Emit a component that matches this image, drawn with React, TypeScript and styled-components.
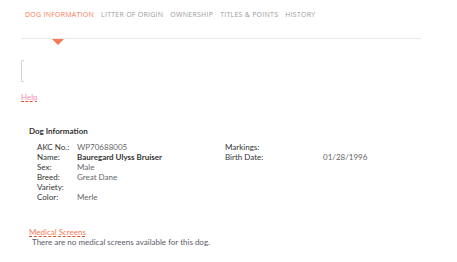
import React, { ReactElement } from "react";
import styled, { createGlobalStyle } from "styled-components";

const GlobalStyle = createGlobalStyle`
  body {
    margin: 0;
    background: #ffffff;
    font-family: "Lato", "Liberation Sans", sans-serif;
  }
`;

const colors = {
  accent: "#f47a55",
  tabGray: "#9a9a9a",
  line: "#e9e9e9",
  label: "#333333",
  value: "#666666",
  pink: "#f28fb4",
};

const Page = styled.div`
  display: flex;
  flex-direction: column;
  width: 400px;
  padding-left: 21px;
`;

const TabBar = styled.div`
  display: flex;
  flex-direction: row;
  align-items: flex-start;
  gap: 7px;
  height: 39px;
  padding: 10px 0 0 4px;
  box-sizing: border-box;
  border-bottom: 1px solid ${colors.line};
`;

const Tab = styled.div<{ $active?: boolean }>`
  position: relative;
  font-family: "Open Sans", "Liberation Sans", sans-serif;
  font-size: 7px;
  line-height: 9px;
  text-transform: uppercase;
  letter-spacing: 0.25px;
  color: ${(p) => (p.$active ? colors.accent : colors.tabGray)};
  height: 28px;

  &::after {
    content: "";
    display: ${(p) => (p.$active ? "block" : "none")};
    position: absolute;
    left: 50%;
    bottom: -7px;
    margin-left: -8px;
    border-left: 6px solid transparent;
    border-right: 6px solid transparent;
    border-top: 6px solid ${colors.accent};
  }
`;

const EmptyBox = styled.div`
  width: 2px;
  height: 20px;
  margin-top: 21px;
  border: 1px solid #d4d4d4;
  border-right: none;
  border-radius: 2px 0 0 2px;
`;

const DashedLink = styled.a<{ $color: string }>`
  align-self: flex-start;
  font-size: 8px;
  line-height: 10px;
  color: ${(p) => p.$color};
  text-decoration: underline dashed #d9532c;
  text-underline-offset: 1px;
  cursor: pointer;
`;

const HelpLink = styled(DashedLink)`
  margin-top: 10px;
`;

const Section = styled.div`
  display: flex;
  flex-direction: column;
  padding-left: 8px;
  margin-top: 24px;
`;

const SectionTitle = styled.div`
  font-size: 8px;
  font-weight: 700;
  color: ${colors.label};
  line-height: 10px;
`;

const InfoGrid = styled.div`
  display: grid;
  grid-template-columns: 188px 1fr;
  padding-left: 8px;
  margin-top: 6px;
`;

const Column = styled.div`
  display: flex;
  flex-direction: column;
`;

const Row = styled.div<{ $labelWidth: number }>`
  display: grid;
  grid-template-columns: ${(p) => p.$labelWidth}px 1fr;
  font-size: 8px;
  line-height: 10px;
  height: 10px;
`;

const Label = styled.span`
  color: ${colors.label};
`;

const Value = styled.span<{ $strong?: boolean }>`
  color: ${(p) => (p.$strong ? colors.label : colors.value)};
  font-weight: ${(p) => (p.$strong ? 700 : 400)};
`;

const MedicalBlock = styled.div`
  display: flex;
  flex-direction: column;
  margin-top: 25px;
`;

const EmptyNote = styled.div`
  font-size: 8px;
  line-height: 10px;
  color: #5c5a6a;
  padding-left: 3px;
`;

const tabs = ["Dog Information", "Litter of Origin", "Ownership", "Titles & Points", "History"];

const leftRows: [string, string, boolean?][] = [
  ["AKC No.:", "WP70688005"],
  ["Name:", "Bauregard Ulyss Bruiser", true],
  ["Sex:", "Male"],
  ["Breed:", "Great Dane"],
  ["Variety:", ""],
  ["Color:", "Merle"],
];

const rightRows: [string, string][] = [
  ["Markings:", ""],
  ["Birth Date:", "01/28/1996"],
];

function App(): ReactElement {
  return (
    <Page>
      <GlobalStyle />
      <TabBar>
        {tabs.map((t, i) => (
          <Tab key={t} $active={i === 0}>
            {t}
          </Tab>
        ))}
      </TabBar>
      <EmptyBox />
      <HelpLink $color={colors.pink}>Help</HelpLink>
      <Section>
        <SectionTitle>Dog Information</SectionTitle>
        <InfoGrid>
          <Column>
            {leftRows.map(([label, value, strong]) => (
              <Row key={label} $labelWidth={40}>
                <Label>{label}</Label>
                <Value $strong={strong}>{value}</Value>
              </Row>
            ))}
          </Column>
          <Column>
            {rightRows.map(([label, value]) => (
              <Row key={label} $labelWidth={98}>
                <Label>{label}</Label>
                <Value>{value}</Value>
              </Row>
            ))}
          </Column>
        </InfoGrid>
        <MedicalBlock>
          <DashedLink $color={colors.accent}>Medical Screens</DashedLink>
          <EmptyNote>There are no medical screens available for this dog.</EmptyNote>
        </MedicalBlock>
      </Section>
    </Page>
  );
}

export default App;
